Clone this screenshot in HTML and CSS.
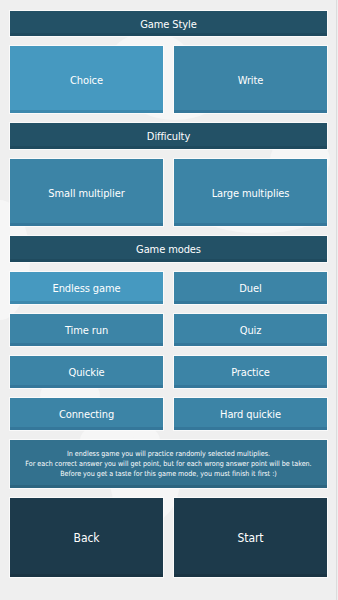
FILE: index.html
```html
<!DOCTYPE html>
<html>
<head>
<meta charset="utf-8">
<link rel="stylesheet" href="styles.css">
</head>
<body>
<div class="screen">
  <svg class="clouds" width="338" height="600" viewBox="0 0 338 600" aria-hidden="true">
    <g fill="#f6f6f6">
      <ellipse cx="150" cy="55" rx="38" ry="22"/>
      <ellipse cx="175" cy="95" rx="45" ry="25"/>
      <ellipse cx="0" cy="260" rx="30" ry="60"/>
      <ellipse cx="260" cy="215" rx="60" ry="18"/>
      <ellipse cx="300" cy="160" rx="30" ry="25"/>
      <ellipse cx="70" cy="395" rx="30" ry="18"/>
      <ellipse cx="120" cy="440" rx="40" ry="20"/>
      <ellipse cx="145" cy="480" rx="35" ry="45"/>
    </g>
  </svg>
  <main class="menu">
    <div class="header">Game Style</div>
    <div class="row big">
      <button class="btn active">Choice</button>
      <button class="btn">Write</button>
    </div>
    <div class="header">Difficulty</div>
    <div class="row big">
      <button class="btn">Small multiplier</button>
      <button class="btn">Large multiplies</button>
    </div>
    <div class="header">Game modes</div>
    <div class="modes">
      <button class="btn small active">Endless game</button>
      <button class="btn small">Duel</button>
      <button class="btn small">Time run</button>
      <button class="btn small">Quiz</button>
      <button class="btn small">Quickie</button>
      <button class="btn small">Practice</button>
      <button class="btn small">Connecting</button>
      <button class="btn small">Hard quickie</button>
    </div>
    <div class="info">In endless game you will practice randomly selected multiplies.<br>For each correct answer you will get point, but for each wrong answer point will be taken.<br>Before you get a taste for this game mode, you must finish it first :)</div>
    <div class="row actions">
      <button class="btn dark">Back</button>
      <button class="btn dark">Start</button>
    </div>
  </main>
  <div class="scrollbar"></div>
</div>
</body>
</html>
```
FILE: styles.css
```css
html, body {
  margin: 0;
  padding: 0;
  background: #efefef;
}
.screen {
  position: relative;
  width: 338px;
  height: 600px;
  overflow: hidden;
  font-family: "DejaVu Sans Condensed", "DejaVu Sans", sans-serif;
  color: #ffffff;
}
.clouds {
  position: absolute;
  left: 0;
  top: 0;
}
.menu {
  position: relative;
  display: flex;
  flex-direction: column;
  gap: 10px;
  padding: 11px 11px 0 10px;
  width: 317px;
}
.header {
  height: 26px;
  background: #235166;
  box-shadow: 0 0 0 1px rgba(255,255,255,0.7), inset 0 -3px 0 #1f4a5e;
  display: flex;
  align-items: center;
  justify-content: center;
  font-size: 11px;
  letter-spacing: -0.1px;
  padding-top: 1px;
  box-sizing: border-box;
}
.header:first-child {
  height: 25px;
}
.row {
  display: grid;
  grid-template-columns: 153px 153px;
  column-gap: 11px;
}
.row.big .btn {
  height: 67px;
}
.modes {
  display: grid;
  grid-template-columns: 153px 153px;
  column-gap: 11px;
  row-gap: 10px;
}
.btn {
  border: none;
  margin: 0;
  padding: 0;
  font-family: inherit;
  color: #ffffff;
  font-size: 11px;
  letter-spacing: -0.1px;
  background: #3c84a6;
  box-shadow: 0 0 0 1px rgba(255,255,255,0.7), inset 0 -3px 0 #35779a;
  display: flex;
  align-items: center;
  justify-content: center;
  padding-top: 1px;
}
.btn.active {
  background: #4699c0;
  box-shadow: 0 0 0 1px rgba(255,255,255,0.7), inset 0 -3px 0 #3d88ad;
}
.btn.small {
  height: 32px;
}
.info {
  height: 48px;
  box-sizing: border-box;
  background: #33718e;
  box-shadow: 0 0 0 1px rgba(255,255,255,0.7), inset 0 -3px 0 #2d6580;
  font-size: 7.1px;
  line-height: 10px;
  text-align: center;
  padding-top: 9px;
}
.actions .btn {
  height: 79px;
  font-size: 12px;
}
.btn.dark {
  background: #1d3a4b;
  box-shadow: 0 0 0 1px rgba(255,255,255,0.7), inset 0 -3px 0 #1a3443;
}
.scrollbar {
  position: absolute;
  right: 1px;
  top: 0;
  width: 1px;
  height: 600px;
  background: #dcdcdc;
}
```
